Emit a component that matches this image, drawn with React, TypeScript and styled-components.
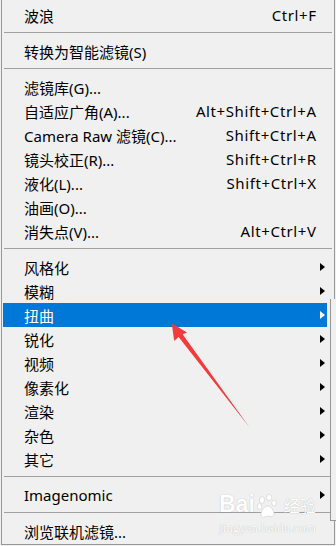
import React from "react"
import styled, { createGlobalStyle } from "styled-components"

const Global = createGlobalStyle`
  html, body {
    margin: 0;
    padding: 0;
    background: #f0f0f0;
  }
  body {
    width: 336px;
    height: 546px;
    overflow: hidden;
    position: relative;
  }
`

type Entry =
  | { kind: "sep" }
  | { kind: "item"; label: string; shortcut?: string; sub?: boolean; active?: boolean }

const entries: Entry[] = [
  { kind: "item", label: "波浪", shortcut: "Ctrl+F" },
  { kind: "sep" },
  { kind: "item", label: "转换为智能滤镜(S)" },
  { kind: "sep" },
  { kind: "item", label: "滤镜库(G)..." },
  { kind: "item", label: "自适应广角(A)...", shortcut: "Alt+Shift+Ctrl+A" },
  { kind: "item", label: "Camera Raw 滤镜(C)...", shortcut: "Shift+Ctrl+A" },
  { kind: "item", label: "镜头校正(R)...", shortcut: "Shift+Ctrl+R" },
  { kind: "item", label: "液化(L)...", shortcut: "Shift+Ctrl+X" },
  { kind: "item", label: "油画(O)..." },
  { kind: "item", label: "消失点(V)...", shortcut: "Alt+Ctrl+V" },
  { kind: "sep" },
  { kind: "item", label: "风格化", sub: true },
  { kind: "item", label: "模糊", sub: true },
  { kind: "item", label: "扭曲", sub: true, active: true },
  { kind: "item", label: "锐化", sub: true },
  { kind: "item", label: "视频", sub: true },
  { kind: "item", label: "像素化", sub: true },
  { kind: "item", label: "渲染", sub: true },
  { kind: "item", label: "杂色", sub: true },
  { kind: "item", label: "其它", sub: true },
  { kind: "sep" },
  { kind: "item", label: "Imagenomic", sub: true },
  { kind: "sep" },
  { kind: "item", label: "浏览联机滤镜..." },
]

export default function App() {
  return (
    <>
      <Global />
      <S.Menu>
        {entries.map((e, i) =>
          e.kind === "sep" ? (
            <S.Sep key={i} />
          ) : (
            <S.Row key={i} $active={!!e.active}>
              <S.Label>{e.label}</S.Label>
              {e.shortcut && <S.Shortcut>{e.shortcut}</S.Shortcut>}
              {e.sub && <S.Caret $active={!!e.active} />}
            </S.Row>
          )
        )}
      </S.Menu>

      {/* edge of the flyout window that sits behind the right side */}
      <S.SubEdge />

      <S.Watermark>
        <S.WmLogo>
          Bai
          <svg width="20" height="24" viewBox="0 0 20 24">
            <g fill="#fff" stroke="#d6d6d6" strokeWidth="0.8">
              <ellipse cx="5" cy="6" rx="2.6" ry="3.4" />
              <ellipse cx="12" cy="3.6" rx="2.6" ry="3.2" />
              <ellipse cx="2.6" cy="12.5" rx="2.2" ry="3" />
              <ellipse cx="17" cy="9" rx="2.3" ry="3" />
              <path d="M4 21c0-5 4-9 7-9s6 5 6 8c0 3-3 3-6 2-3 1-7 3-7-1z" />
            </g>
          </svg>
          <span>经验</span>
        </S.WmLogo>
        <S.WmUrl>jingyan.baidu.com</S.WmUrl>
      </S.Watermark>

      <S.Arrow width="336" height="546" viewBox="0 0 336 546">
        <polygon
          points="171.7,323.3 187,332.6 182.6,334.2 249.6,427.6 178.6,337 174.2,341"
          fill="#f43a3a"
        />
      </S.Arrow>
    </>
  )
}

const S = {
  Menu: styled.div`
    margin-left: 1px;
    width: 332px;
    padding: 3px 0 1px;
    border-left: 1px solid #979797;
    border-right: 1px solid #979797;
    border-bottom: 1px solid #979797;
    background: #f0f0f0;
    font-family: "Noto Sans", "Noto Sans CJK SC", sans-serif;
    font-size: 15px;
    color: #000;
  `,

  Row: styled.div<{ $active: boolean }>`
    display: flex;
    align-items: center;
    height: 24px;
    margin: 0 7px 0 1px;
    padding: 0 2px 0 21px;
    background: ${(p) => (p.$active ? "#0078d7" : "transparent")};
    color: ${(p) => (p.$active ? "#fff" : "#000")};
    white-space: nowrap;
  `,

  Label: styled.span`
    flex: 1;
  `,

  Shortcut: styled.span`
    padding-right: 9px;
    letter-spacing: 0.6px;
    margin-right: -0.6px;
  `,

  Caret: styled.span<{ $active: boolean }>`
    width: 0;
    height: 0;
    border-top: 4px solid transparent;
    border-bottom: 4px solid transparent;
    border-left: 5px solid ${(p) => (p.$active ? "#fff" : "#000")};
  `,

  Sep: styled.div`
    height: 12px;
    margin: 0 2px;
    display: flex;
    flex-direction: column;
    &::before {
      content: "";
      margin-top: 5px;
      height: 1px;
      background: #a0a0a0;
    }
  `,

  SubEdge: styled.div`
    position: absolute;
    left: 330px;
    top: 299px;
    width: 5px;
    height: 221px;
    background: #f0f0f0;
    border-left: 1px solid #979797;
    border-bottom: 1px solid #979797;
  `,

  Watermark: styled.div`
    position: absolute;
    left: 219px;
    top: 490px;
    display: flex;
    flex-direction: column;
    align-items: flex-start;
    color: #fff;
    text-shadow: 0 0 1px rgba(0, 0, 0, 0.3);
    pointer-events: none;
  `,

  WmLogo: styled.div`
    display: flex;
    align-items: flex-end;
    gap: 2px;
    font-family: "Liberation Sans", sans-serif;
    font-weight: bold;
    font-size: 23px;
    line-height: 28px;
    span {
      margin-left: 5px;
      font-family: "Noto Sans CJK SC", sans-serif;
      font-weight: normal;
      font-size: 16px;
      line-height: 26px;
    }
  `,

  WmUrl: styled.div`
    font-family: "Liberation Serif", serif;
    font-size: 13px;
    line-height: 16px;
    margin-top: 2px;
  `,

  Arrow: styled.svg`
    position: absolute;
    left: 0;
    top: 0;
    pointer-events: none;
  `,
}
